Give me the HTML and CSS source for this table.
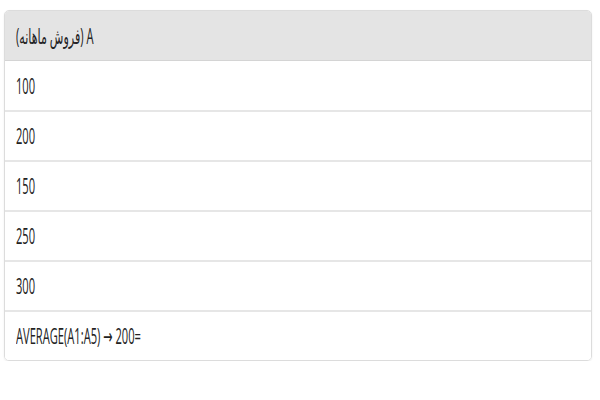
FILE: index.html
```html
<!DOCTYPE html>
<html lang="fa">
<head>
<meta charset="utf-8">
<link rel="stylesheet" href="styles.css">
</head>
<body>
<div class="sheet">
  <div class="row head"><span class="txt" dir="rtl">A (فروش ماهانه)</span></div>
  <div class="row"><span class="txt">100</span></div>
  <div class="row"><span class="txt">200</span></div>
  <div class="row"><span class="txt">150</span></div>
  <div class="row"><span class="txt">250</span></div>
  <div class="row"><span class="txt">300</span></div>
  <div class="row last"><span class="txt" dir="rtl">=AVERAGE(A1:A5) → 200</span></div>
</div>
</body>
</html>
```
FILE: styles.css
```css
html, body {
  margin: 0;
  padding: 0;
  background: #ffffff;
}
body {
  padding: 10px 8px 0 4px;
}
.sheet {
  border: 1px solid #dcdcdc;
  border-radius: 5px;
  overflow: hidden;
  box-shadow: 0 1px 2px rgba(0,0,0,0.08);
  font-family: "Open Sans", "DejaVu Sans", sans-serif;
  color: #222;
}
.row {
  height: 48px;
  border-top: 2px solid #e6e6e6;
  display: flex;
  align-items: center;
  padding-left: 11px;
  background: #fff;
}
.row.head {
  border-top: none;
  height: 49px;
  background: #e4e4e4;
  border-bottom: 1px solid #d4d4d4;
}
.row.head + .row {
  border-top: none;
  height: 49px;
}
.txt {
  display: inline-block;
  font-size: 21px;
  transform: scaleX(0.53);
  transform-origin: left center;
  white-space: nowrap;
}
```
